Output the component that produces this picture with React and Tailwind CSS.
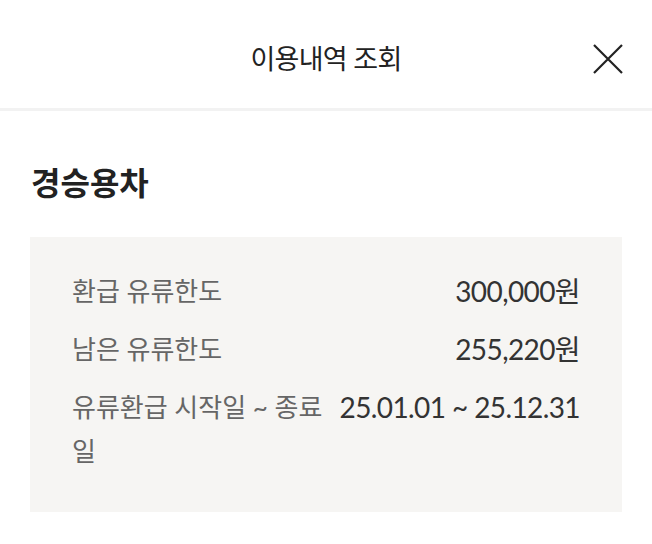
import React from 'react'

const rows = [
  { label: '환급 유류한도', value: '300,000원' },
  { label: '남은 유류한도', value: '255,220원' },
  { label: '유류환급 시작일 ~ 종료일', value: '25.01.01 ~ 25.12.31' },
]

export default function App(){
  return (
    <div className="w-[652px] h-[544px] bg-white overflow-hidden" style={{ fontFamily: 'Lato, "Noto Sans CJK KR", sans-serif' }}>
      <header className="relative h-[111px] pt-[10px] flex items-center justify-center border-b-[3px] border-[#f2f2f2]">
        <h1 className="text-[27px] text-[#222] tracking-tight">이용내역 조회</h1>
        <button className="absolute right-[29px] top-[44px] w-[30px] h-[30px] text-[#222]" aria-label="닫기">
          <svg viewBox="0 0 30 30" className="w-full h-full" fill="none" stroke="currentColor" strokeWidth="2.2">
            <path d="M1 1 L29 29 M29 1 L1 29" />
          </svg>
        </button>
      </header>

      <section className="px-[30px] pt-[50px]">
        <h2 className="text-[32px] font-bold text-[#222] leading-[44px] pl-[1px]">경승용차</h2>

        <div className="mt-[32px] bg-[#f6f5f3] px-[42px] pt-[32px] pb-[39px] flex flex-col gap-[14px]">
          {rows.map(r => (
            <div key={r.label} className="flex items-start justify-between gap-[12px] text-[26px] leading-[44px]">
              <span className="flex-1 text-[#666]">{r.label}</span>
              <span className="whitespace-nowrap text-[#333] text-[28px] tracking-[-0.6px]">{r.value}</span>
            </div>
          ))}
        </div>
      </section>
    </div>
  )
}
